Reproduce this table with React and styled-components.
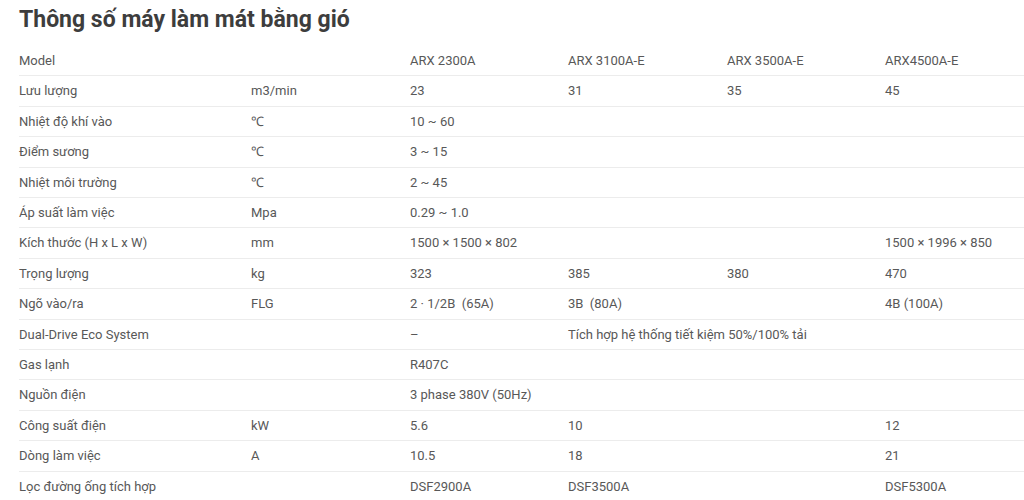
import React from "react";
import styled, { createGlobalStyle } from "styled-components";

const Global = createGlobalStyle`
  html, body { margin: 0; padding: 0; background: #fff; }
  body { font-family: Roboto, "Liberation Sans", Arial, sans-serif; overflow: hidden; }
`;

const Page = styled.div`
  padding: 6px 0 0 19px;
  overflow: hidden;
`;

const Title = styled.h2`
  margin: 0 0 12px;
  font-size: 23px;
  line-height: 28px;
  font-weight: 700;
  color: #3d3d3d;
`;

const Table = styled.table`
  border-collapse: collapse;
  table-layout: fixed;
  width: 1024px;
`;

const Row = styled.tr`
  border-top: ${(p) => (p.$first ? "none" : "1px solid #ececec")};
`;

const Cell = styled.td`
  padding: 5px 0;
  height: 19.4px;
  font-size: 13px;
  line-height: 19.4px;
  color: #585858;
  white-space: nowrap;
  text-align: left;
  vertical-align: middle;
`;

const widths = [232, 159, 158, 159, 158, 158];

const rows = [
  ["Model", "", "ARX 2300A", "ARX 3100A-E", "ARX 3500A-E", "ARX4500A-E"],
  ["Lưu lượng", "m3/min", "23", "31", "35", "45"],
  ["Nhiệt độ khí vào", "℃", "10 ~ 60", "", "", ""],
  ["Điểm sương", "℃", "3 ~ 15", "", "", ""],
  ["Nhiệt môi trường", "℃", "2 ~ 45", "", "", ""],
  ["Áp suất làm việc", "Mpa", "0.29 ~ 1.0", "", "", ""],
  ["Kích thước (H x L x W)", "mm", "1500 × 1500 × 802", "", "", "1500 × 1996 × 850"],
  ["Trọng lượng", "kg", "323", "385", "380", "470"],
  ["Ngõ vào/ra", "FLG", "2 · 1/2B\u00a0\u00a0(65A)", "3B\u00a0\u00a0(80A)", "", "4B (100A)"],
  ["Dual-Drive Eco System", "", "–", { text: "Tích hợp hệ thống tiết kiệm 50%/100% tải", span: 3 }],
  ["Gas lạnh", "", "R407C", "", "", ""],
  ["Nguồn điện", "", "3 phase 380V (50Hz)", "", "", ""],
  ["Công suất điện", "kW", "5.6", "10", "", "12"],
  ["Dòng làm việc", "A", "10.5", "18", "", "21"],
  ["Lọc đường ống tích hợp", "", "DSF2900A", "DSF3500A", "", "DSF5300A"],
];

export default function App() {
  return (
    <>
      <Global />
      <Page>
        <Title>Thông số máy làm mát bằng gió</Title>
        <Table>
          <colgroup>
            {widths.map((w, i) => (
              <col key={i} style={{ width: w }} />
            ))}
          </colgroup>
          <tbody>
            {rows.map((r, i) => (
              <Row key={i} $first={i === 0}>
                {r.map((c, j) =>
                  typeof c === "object" ? (
                    <Cell key={j} colSpan={c.span}>{c.text}</Cell>
                  ) : (
                    <Cell key={j}>{c}</Cell>
                  )
                )}
              </Row>
            ))}
          </tbody>
        </Table>
      </Page>
    </>
  );
}
